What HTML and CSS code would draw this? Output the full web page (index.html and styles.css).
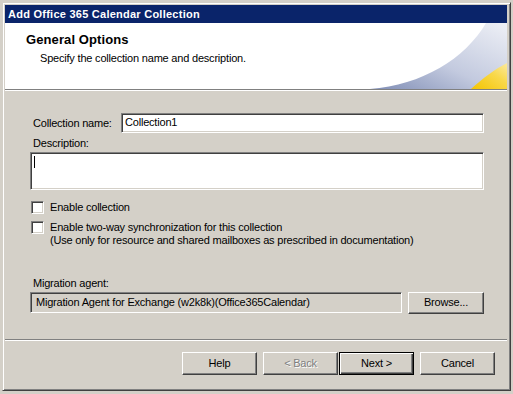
FILE: index.html
```html
<!DOCTYPE html>
<html>
<head>
<meta charset="utf-8">
<link rel="stylesheet" href="styles.css">
</head>
<body>
<div class="window">
  <div class="titlebar">Add Office 365 Calendar Collection</div>
  <div class="header">
    <div class="h-title">General Options</div>
    <div class="h-sub">Specify the collection name and description.</div>
    <svg class="swoosh" width="140" height="66" viewBox="0 0 140 66">
      <defs>
        <linearGradient id="bg1" x1="0" y1="1" x2="1" y2="0">
          <stop offset="0" stop-color="#7f8db5"/>
          <stop offset="0.45" stop-color="#c3cadf"/>
          <stop offset="1" stop-color="#eef0f6"/>
        </linearGradient>
        <linearGradient id="yg" x1="0" y1="1" x2="1" y2="0">
          <stop offset="0" stop-color="#f4c400"/>
          <stop offset="0.6" stop-color="#f8d84a"/>
          <stop offset="1" stop-color="#fbe9a0"/>
        </linearGradient>
      </defs>
      <path d="M3,66 C55,62 98,36 119,0 L140,0 L140,66 Z" fill="url(#bg1)"/>
      <path d="M104,66 C116,55 128,46 140,40 L140,66 Z" fill="url(#yg)"/>
    </svg>
  </div>
  <div class="content">
    <div class="row-name">
      <span class="lbl name-lbl">Collection name:</span>
      <div class="field name-field">Collection1</div>
    </div>
    <div class="lbl desc-lbl">Description:</div>
    <div class="field desc-field"><span class="caret"></span></div>
    <div class="check first">
      <span class="box"></span>
      <span class="check-text">Enable collection</span>
    </div>
    <div class="check second">
      <span class="box"></span>
      <span class="check-text">Enable two-way synchronization for this collection<br>(Use only for resource and shared mailboxes as prescribed in documentation)</span>
    </div>
    <div class="lbl agent-lbl">Migration agent:</div>
    <div class="agent-row">
      <div class="field agent-field">Migration Agent for Exchange (w2k8k)(Office365Calendar)</div>
      <div class="btn browse">Browse...</div>
    </div>
  </div>
  <div class="sep"></div>
  <div class="buttons">
    <div class="btn">Help</div>
    <div class="btn disabled back">&lt; Back</div>
    <div class="btn default">Next &gt;</div>
    <div class="btn cancel">Cancel</div>
  </div>
</div>
</body>
</html>
```

FILE: styles.css
```css
html, body {
  margin: 0;
  padding: 0;
  background: #d4d0c8;
}
body {
  font-family: "Liberation Sans", Arial, sans-serif;
  font-size: 11px;
  letter-spacing: -0.2px;
  color: #000;
}
.window {
  margin: 2px 0 0 2px;
  width: 503px;
  height: 383px;
  border: 1px solid;
  border-color: #d4d0c8 #404040 #404040 #d4d0c8;
  box-shadow: inset 1px 1px 0 #fff, inset -1px -1px 0 #808080;
  padding: 2px;
  display: flex;
  flex-direction: column;
}
.titlebar {
  height: 18px;
  background: #0a246a;
  color: #fff;
  font-weight: bold;
  font-size: 11px;
  letter-spacing: 0.25px;
  line-height: 18px;
  padding-left: 3px;
  margin-right: 1px;
}
.header {
  position: relative;
  height: 66px;
  background: #fff;
  border-bottom: 1px solid #808080;
  box-shadow: 0 1px 0 #fff;
  overflow: hidden;
  margin-right: 1px;
}
.h-title {
  font-weight: bold;
  font-size: 13px;
  letter-spacing: 0.1px;
  margin: 10px 0 0 21px;
  line-height: 14px;
}
.h-sub {
  margin: 5px 0 0 35px;
  line-height: 13px;
}
.swoosh {
  position: absolute;
  right: 0;
  bottom: 0;
}
.content {
  padding: 23px 24px 0 25px;
  display: flex;
  flex-direction: column;
}
.lbl {
  line-height: 13px;
  padding-left: 3px;
}
.field {
  background: #fff;
  border: 1px solid;
  border-color: #808080 #fff #fff #808080;
  box-shadow: inset 1px 1px 0 #404040, inset -1px -1px 0 #d4d0c8;
  box-sizing: border-box;
}
.row-name {
  display: flex;
  align-items: center;
  height: 20px;
}
.name-lbl {
  width: 88px;
  flex: none;
}
.name-field {
  flex: 1;
  height: 20px;
  line-height: 17px;
  padding-left: 3px;
}
.desc-lbl {
  margin-top: 4px;
}
.desc-field {
  margin-top: 2px;
  height: 38px;
  position: relative;
}
.caret {
  position: absolute;
  left: 3px;
  top: 3px;
  width: 1px;
  height: 12px;
  background: #000;
}
.check {
  display: flex;
  align-items: flex-start;
  padding-left: 1px;
}
.check.first {
  margin-top: 11px;
}
.check.second {
  margin-top: 7px;
}
.box {
  width: 13px;
  height: 13px;
  box-sizing: border-box;
  background: #fff;
  border: 1px solid;
  border-color: #808080 #fff #fff #808080;
  box-shadow: inset 1px 1px 0 #404040, inset -1px -1px 0 #d4d0c8;
  flex: none;
  margin-right: 6px;
}
.check-text {
  line-height: 13px;
}
.agent-lbl {
  margin-top: 30px;
}
.agent-row {
  display: flex;
  align-items: flex-start;
  margin-top: 2px;
}
.agent-field {
  background: #d4d0c8;
  width: 372px;
  height: 21px;
  line-height: 18px;
  padding-left: 5px;
  flex: none;
}
.btn {
  width: 75px;
  height: 23px;
  box-sizing: border-box;
  border: 1px solid;
  border-color: #fff #404040 #404040 #fff;
  box-shadow: inset -1px -1px 0 #808080;
  text-align: center;
  line-height: 20px;
  background: #d4d0c8;
  flex: none;
}
.browse {
  margin-left: 6px;
  width: 76px;
  height: 22px;
  line-height: 19px;
}
.sep {
  margin-top: 25px;
  height: 0;
  border-top: 1px solid #808080;
  border-bottom: 1px solid #fff;
  margin-right: 1px;
}
.buttons {
  display: flex;
  padding: 11px 0 0 177px;
}
.buttons .btn {
  margin-right: 6px;
}
.buttons .back {
  margin-right: 0;
}
.disabled {
  color: #808080;
  text-shadow: 1px 1px 0 #fff;
}
.default {
  border: 1px solid #000;
  box-shadow: inset 1px 1px 0 #fff, inset -1px -1px 0 #404040, inset -2px -2px 0 #808080;
  margin-left: 1px;
}
```
